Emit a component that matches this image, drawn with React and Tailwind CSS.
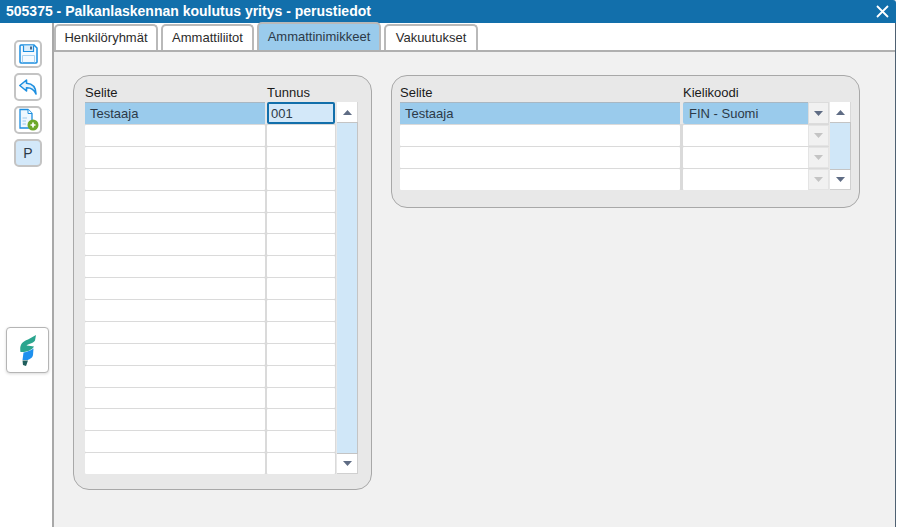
const FONT = "font-['Liberation_Sans',Arial,sans-serif]";

function Arrow({ up = false, disabled = false }) {
  return (
    <svg width="9" height="5" viewBox="0 0 9 5" className="block">
      <path d={up ? "M4.5 0 L9 5 L0 5 Z" : "M0 0 L9 0 L4.5 5 Z"} fill={disabled ? "#c4c4c4" : "#5f6c84"} />
    </svg>
  );
}

function Scrollbar() {
  return (
    <div className="flex w-[21px] flex-col self-stretch">
      <div className="flex h-[20px] shrink-0 items-center justify-center border-r border-[#d8d8d8] bg-white">
        <Arrow up />
      </div>
      <div className="flex-1 border-y border-r border-[#c4c4c4] bg-[#d0e7f8]" />
      <div className="flex h-[20px] shrink-0 items-center justify-center border-r border-b border-[#d0d0d0] bg-white">
        <Arrow />
      </div>
    </div>
  );
}

function ToolButton({ children, active }) {
  return (
    <div
      className={
        "flex h-[28px] w-[28px] items-center justify-center rounded-[5px] border-2 border-[#c4c4c4] " +
        (active ? "bg-[#d3e8f9]" : "bg-white")
      }
    >
      {children}
    </div>
  );
}

function Tab({ label, active, width }) {
  return (
    <div
      className={
        "flex items-center justify-center rounded-t-[5px] border-2 border-b-0 border-[#b9b9b9] text-[13px] " +
        width +
        (active ? " h-[28px] bg-[#9acbec] text-[#2c3a48]" : " h-[26px] bg-white text-[#2b2b2b]")
      }
    >
      {label}
    </div>
  );
}

function LeftTable() {
  const rows = Array.from({ length: 16 });
  return (
    <div className="flex gap-[1px]">
      <div className="w-[251px] bg-[#dadada]">
        <div className="flex h-[22px] gap-[2px] bg-[#e8e8e8]">
          <div className="flex w-[180px] items-center border-t border-[#a9b7c2] bg-[#9acbec] pl-[5px] text-[13px] text-[#2c3a48]">Testaaja</div>
          <div className="flex w-[68px] items-center rounded-[2px] border-2 border-[#126fab] bg-[#d3e8f9] pl-[2px] pt-[2px] text-[13px] text-[#2c3a48]">001</div>
        </div>
        {rows.map((_, i) => (
          <div key={i} className="mt-px flex h-[20.875px] gap-[2px]">
            <div className="w-[180px] rounded-[1px] bg-white" />
            <div className="w-[68px] rounded-[1px] bg-white" />
          </div>
        ))}
      </div>
      <Scrollbar />
    </div>
  );
}

function RightTable() {
  const rows = [0, 1, 2];
  return (
    <div className="flex gap-[1px]">
      <div className="bg-[#dadada]">
        <div className="flex h-[22px] gap-[3px] bg-[#e8e8e8]">
          <div className="flex w-[280px] items-center border-t border-[#a9b7c2] bg-[#9acbec] pl-[5px] text-[13px] text-[#2c3a48]">Testaaja</div>
          <div className="flex w-[146px]">
            <div className="flex flex-1 items-center rounded-l-[2px] border-t border-[#a9b7c2] bg-[#9acbec] pl-[6px] text-[13px] text-[#2c3a48]">FIN - Suomi</div>
            <div className="flex w-[21px] items-center justify-center border border-[#dcdcdc] bg-[#f1f1f1]">
              <Arrow />
            </div>
          </div>
        </div>
        {rows.map((i) => (
          <div key={i} className="mt-px flex h-[21px] gap-[3px]">
            <div className="w-[280px] rounded-[1px] bg-white" />
            <div className="flex w-[146px]">
              <div className="flex-1 rounded-l-[1px] bg-white" />
              <div className="flex w-[21px] items-center justify-center border border-[#e4e4e4] bg-[#f1f1f1]">
                <Arrow disabled />
              </div>
            </div>
          </div>
        ))}
      </div>
      <Scrollbar />
    </div>
  );
}

export default function App() {
  return (
    <div className={"h-[527px] w-[897px] overflow-hidden bg-white " + FONT}>
      <div className="flex h-full w-[896px] flex-col bg-[#f1f1f1]">
        <div className="flex h-[23px] shrink-0 items-center justify-between rounded-tr-[3px] bg-[#126fab] pl-[6px] pr-[7px]">
          <span className="text-[14px] font-bold text-white">505375 - Palkanlaskennan koulutus yritys - perustiedot</span>
          <svg width="13" height="13" viewBox="0 0 13 13">
            <path d="M1 1 L12 12 M12 1 L1 12" stroke="#fff" strokeWidth="1.8" />
          </svg>
        </div>
        <div className="flex min-h-0 flex-1">
          <aside className="flex w-[54px] shrink-0 flex-col items-start border-r-2 border-[#a8a8a8] bg-white pl-[14px] pt-[17px]">
            <div className="flex flex-col gap-[5px]">
              <ToolButton>
                <svg width="20" height="20" viewBox="0 0 20 20" fill="none">
                  <path d="M2 2 Q2 1 3 1 H16 L19 4 V18 Q19 19 18 19 H3 Q2 19 2 18 Z" stroke="#1d8fe0" strokeWidth="1.5" fill="#f4faff" />
                  <path d="M5.5 1.5 V7.5 H15.5 V1.5" stroke="#1d8fe0" strokeWidth="1.2" fill="#dceefb" />
                  <rect x="12" y="2.5" width="2" height="3" fill="#4d6a8c" />
                  <path d="M4.5 18.5 V11.5 H16.5 V18.5" stroke="#a8d2f0" strokeWidth="1" />
                </svg>
              </ToolButton>
              <ToolButton>
                <svg width="20" height="18" viewBox="0 0 20 18" fill="none">
                  <path d="M8.5 2 L1.8 7.5 L8.5 13 V9.8 C13 9.6 16 11.4 18 16 C18 9.5 14.5 5.6 8.5 5.2 Z" stroke="#1d8fe0" strokeWidth="1.6" strokeLinejoin="round" fill="#e6f3fc" />
                </svg>
              </ToolButton>
              <ToolButton>
                <svg width="24" height="24" viewBox="0 0 24 24" fill="none">
                  <path d="M4 1.5 H12 L16 5.5 V20 H4 Z" stroke="#1d8fe0" strokeWidth="1.3" fill="#eef7fe" />
                  <path d="M12 1.5 V5.5 H16" stroke="#1d8fe0" strokeWidth="1" fill="#fff" />
                  <path d="M6.5 10 H11 M6.5 13 H10 M6.5 16 H10" stroke="#9cc9ec" strokeWidth="1" />
                  <circle cx="17" cy="17" r="5.5" fill="#6da82a" />
                  <path d="M14.5 17 H19.5 M17 14.5 V19.5" stroke="#fff" strokeWidth="1.7" />
                </svg>
              </ToolButton>
              <ToolButton active>
                <span className="text-[14px] text-[#2c3a48]">P</span>
              </ToolButton>
            </div>
            <div className="-ml-[8px] mt-[160px] flex h-[46px] w-[43px] items-center justify-center rounded-[4px] border-[1.5px] border-[#b5b5b5] bg-white shadow-[0_1px_3px_rgba(0,0,0,0.15)]">
              <svg width="16" height="31" viewBox="0 0 16 31">
                <path d="M16 0 L15 5.5 C14 8 9 8.5 6.5 10.5 C9.5 11 12 11 14 11.5 C12 15.5 5 17.5 0.5 17 C-0.5 11 1 7 8 4.5 Z" fill="#2ba58f" />
                <path d="M3.5 17.5 C7 17 10.5 15.5 13.5 13.5 L13 20 C12.5 23 9.5 24 8 25 L2.5 25 Z" fill="#1e90ee" />
                <path d="M2.5 25.5 L8 25.5 L6 31 L3 30 Z" fill="#1f5e5c" />
              </svg>
            </div>
          </aside>
          <main className="flex min-w-0 flex-1 flex-col border-r border-[#4f6172]">
            <div className="flex h-[29px] shrink-0 items-end gap-[3px] border-b-2 border-[#b0b0b0] bg-white">
              <Tab label="Henkilöryhmät" width="w-[104px]" />
              <Tab label="Ammattiliitot" width="w-[93px]" />
              <Tab label="Ammattinimikkeet" width="w-[124px]" active />
              <Tab label="Vakuutukset" width="w-[94px]" />
            </div>
            <div className="flex items-start gap-[19px] pl-[19px] pt-[23px]">
              <section className="h-[415px] w-[299px] rounded-[16px] border border-[#a8a8a8] bg-[#e8e8e8] pl-[11px] pt-[7px]">
                <div className="flex h-[19px] items-center text-[13px] text-[#1a1a1a]">
                  <span className="w-[182px]">Selite</span>
                  <span>Tunnus</span>
                </div>
                <LeftTable />
              </section>
              <section className="h-[133px] w-[469px] rounded-[16px] border border-[#a8a8a8] bg-[#e8e8e8] pl-[8px] pt-[7px]">
                <div className="flex h-[19px] items-center text-[13px] text-[#1a1a1a]">
                  <span className="w-[283px]">Selite</span>
                  <span>Kielikoodi</span>
                </div>
                <RightTable />
              </section>
            </div>
          </main>
        </div>
      </div>
    </div>
  );
}
